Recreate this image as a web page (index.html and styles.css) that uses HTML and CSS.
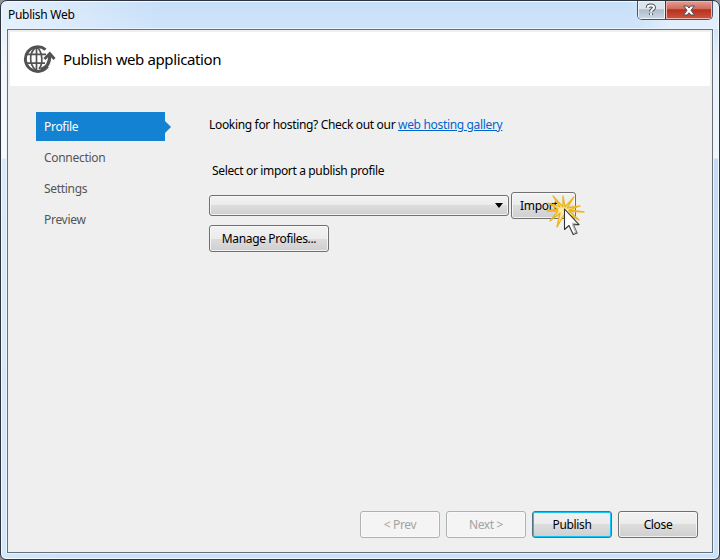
FILE: index.html
```html
<!DOCTYPE html>
<html lang="en">
<head>
<meta charset="utf-8">
<title>Publish Web</title>
<link rel="stylesheet" href="styles.css">
</head>
<body>
<div class="window">
  <div class="titlebar">
    <span class="caption">Publish Web</span>
    <div class="controls">
      <button class="ctl help" aria-label="Help"><svg width="12" height="14" viewBox="0 0 12 14"><path d="M2.7 4.7C2.7 1.7 9 1.7 9 4.6C9 6.5 6 6.6 6 8.6M6 10.3V12" fill="none" stroke="#4d5263" stroke-width="4"/><path d="M2.7 4.7C2.7 1.7 9 1.7 9 4.6C9 6.5 6 6.6 6 8.8M6 10.3V12" fill="none" stroke="#fff" stroke-width="2"/></svg></button>
      <button class="ctl exit" aria-label="Close window"><svg width="12" height="11" viewBox="0 0 12 11"><path d="M.7 1H4.3L6 3L7.7 1H11.3L8 5.3L11.5 10H7.8L6 7.7L4.2 10H.5L4 5.3Z" fill="#fff" stroke="#534b5c"/></svg></button>
    </div>
  </div>
  <div class="client">
    <header class="header">
      <svg class="globe" width="33" height="28" viewBox="0 0 33 28"><g fill="none" stroke="#525252"><path d="M22.5 4.6A12.3 12.3 0 1 0 24.6 21.4" stroke-width="3"/><path d="M13.5 2V25M2 9.3H23M2 18.2H22M12.5 2.5C6 8 6 19 12.5 25M14.5 2.5C20 8 20 19 16 24" stroke-width="1.7"/><path d="M17.5 24.5C23.5 23 26.8 18 26.8 10" stroke-width="3.2"/><path d="M21.4 14L26.8 8.5L31.5 14" stroke-width="2.8"/></g></svg>
      <h1 class="title">Publish web application</h1>
    </header>
    <main class="body">
      <nav class="nav">
        <a class="step active">Profile</a>
        <a class="step">Connection</a>
        <a class="step">Settings</a>
        <a class="step">Preview</a>
      </nav>
      <section class="panel">
        <p class="hosting">Looking for hosting? Check out our <a class="link">web hosting gallery</a></p>
        <p class="label">Select or import a publish profile</p>
        <div class="row">
          <div class="combo"><svg width="8" height="5" viewBox="0 0 8 5"><path d="M0 0H8L4 5Z" fill="#000"/></svg></div>
          <button class="btn import">Import...</button>
          <svg class="click" width="40" height="42" viewBox="0 0 40 42"><path d="M18 12L18 1L20 12L29 2L22 13L35 11L24 15L39 17L24 16L34 25L21 18L17 23L12 32L15 18L5 26L13 16L2 16L13 14L3 8L15 12L8 1Z" fill="#ffeca4" stroke="#edb51a" stroke-width="1.3" stroke-linejoin="round"/><path d="M19.5 14V34.5L24 30.5L28.2 39.5L32 38L28.3 29.6H34Z" fill="#fff" stroke="#333" stroke-width="1.1" stroke-linejoin="round"/><path d="M27 28.5L31.5 28.5M27.5 29.5L30.8 37.2L28.7 38.2" fill="none" stroke="#bdbdbd" stroke-width="1.5"/></svg>
        </div>
        <button class="btn manage">Manage Profiles...</button>
      </section>
    </main>
    <footer class="footer">
      <button class="btn disabled">&lt; Prev</button>
      <button class="btn disabled">Next &gt;</button>
      <button class="btn primary">Publish</button>
      <button class="btn">Close</button>
    </footer>
  </div>
</div>
</body>
</html>
```
FILE: styles.css
```css
* { box-sizing: border-box; }
body { margin: 0; background: #8f929b; font: 12px/16px "Noto Sans", "Open Sans", sans-serif; color: #000; letter-spacing: -.35px; }
h1, p { margin: 0; }
button { font: inherit; letter-spacing: inherit; color: inherit; padding: 0; }
svg { display: block; }
.window { width: 720px; height: 560px; border: 1px solid #2f333d; border-radius: 7px 7px 6px 6px; padding: 0 6px 6px;
  background: linear-gradient(100deg, #ffffff80 0, #fff0 160px), linear-gradient(65deg, #fff0 0 87%, #ffffff66 92%) 0 0 / 100% 28px no-repeat, linear-gradient(#c6dff8 0, #cfe4fa 28px, #e9f1fb 60px, #f1f6fd 157px, #c4dcf5 158px, #c9e1fa 100%);
  box-shadow: inset 0 0 0 1px #f4f9ff; }
.titlebar { height: 28px; display: flex; justify-content: space-between; }
.caption { padding: 6px 0 0 1px; letter-spacing: -.28px; }
.controls { display: flex; width: 76px; height: 19px; border: 1px solid #4c5261; border-top: 0; border-radius: 0 0 5px 5px; overflow: hidden; }
.ctl { border: 0; display: flex; align-items: center; justify-content: center; }
.help { width: 27px; background: linear-gradient(#dce4ed 0 45%, #afbdcb 48%, #cbd9e7); box-shadow: inset 0 0 0 1px #edf3f9; }
.exit { width: 48px; border-left: 1px solid #572c2c; background: linear-gradient(#e4a094, #cf6959 45%, #b8301b 48%, #cb5643); box-shadow: inset 0 0 0 1px #edb7ac; }
.client { height: 524px; border: 1px solid #66707b; background: #efefef; padding: 2px; box-shadow: 0 0 0 1px #e9f4ff; display: flex; flex-direction: column; }
.header { height: 54px; background: #fff; display: flex; align-items: center; padding: 0 0 0 13px; }
.title { margin-left: 7px; font-size: 15px; line-height: 20px; font-weight: 400; letter-spacing: -.38px; }
.body { flex: 1; display: flex; padding: 26px 0 0 26px; }
.nav { width: 173px; color: #555; }
.step { display: flex; align-items: center; width: 129px; height: 29px; margin-bottom: 2px; padding-left: 8px; position: relative; letter-spacing: -.3px; }
.active { background: #1382d3; color: #fff; }
.active::after { content: ""; position: absolute; left: 129px; top: 9px; border: solid transparent; border-width: 6px 0 6px 6px; border-left-color: #1382d3; }
.hosting { padding-top: 5px; letter-spacing: -.33px; }
.link { color: #0066cc; text-decoration: underline; }
.label { padding: 30px 0 0 3px; }
.row { position: relative; display: flex; align-items: center; gap: 2px; margin-top: 13px; }
.combo { width: 300px; height: 21px; border: 1px solid #707070; border-radius: 3px; display: flex; align-items: center; justify-content: flex-end; padding-right: 5px; background: linear-gradient(#f2f2f2, #ebebeb 50%, #dddddd 50%, #cfcfcf); box-shadow: inset 0 0 0 1px #fafafacc; }
.btn { width: 80px; height: 27px; border: 1px solid #707070; border-radius: 3px; background: linear-gradient(#f2f2f2, #ebebeb 50%, #dddddd 50%, #cfcfcf); box-shadow: inset 0 0 0 1px #fafafacc; }
.import { width: 65px; text-align: left; padding-left: 8px; letter-spacing: -.3px; }
.click { position: absolute; left: 336px; top: 3px; }
.manage { display: block; width: 120px; margin-top: 6px; }
.footer { display: flex; justify-content: flex-end; gap: 6px; padding: 0 12px 12px 0; }
.disabled { color: #a3a3a3; background: #f4f4f4; border-color: #adb2b5; }
.primary { border-color: #4b7486; box-shadow: inset 0 0 0 1px #12c4f5; }
```
